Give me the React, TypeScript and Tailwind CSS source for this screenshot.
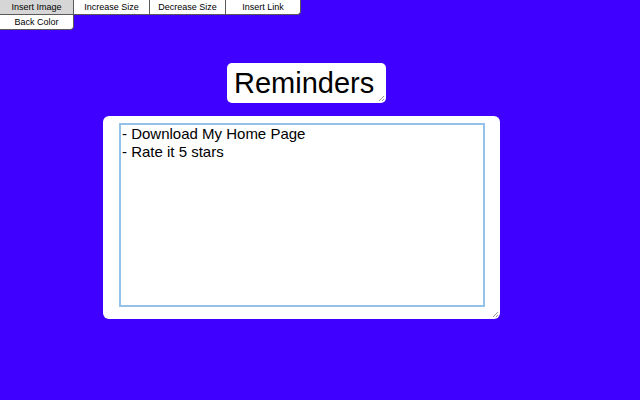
function Grip() {
  return (
    <svg
      className="pointer-events-none absolute bottom-[1px] right-[1px]"
      width="7"
      height="7"
      viewBox="0 0 7 7"
    >
      <path d="M6 1 L1 6 M6 4 L4 6" stroke="#9a9a9a" strokeWidth="1" />
    </svg>
  )
}

const tools = ['Insert Image', 'Increase Size', 'Decrease Size', 'Insert Link']

function App() {
  return (
    <div className="h-[400px] w-[640px] overflow-hidden bg-[#4000ff] font-['Liberation_Sans',Arial,sans-serif]">
      <div className="flex">
        {tools.map((t, i) => (
          <div
            key={t}
            className={
              i === 0
                ? 'flex h-[15px] w-[74px] items-center justify-center border-r border-b border-[#5a5a5a] bg-[#d6d6d6] text-[9px] leading-none text-black'
                : i === 3
                  ? 'flex h-[15px] w-[75px] items-center justify-center rounded-br-[4px] border-r border-b border-[#5a5a5a] bg-white text-[9px] leading-none text-black'
                  : 'flex h-[15px] w-[76px] items-center justify-center border-r border-b border-[#5a5a5a] bg-white text-[9px] leading-none text-black'
            }
          >
            {t}
          </div>
        ))}
      </div>
      <div className="flex h-[15px] w-[74px] items-center justify-center rounded-br-[4px] border-r border-b border-[#5a5a5a] bg-white text-[9px] leading-none text-black">
        Back Color
      </div>

      <div className="relative mt-[33px] ml-[227px] flex h-[40px] w-[159px] items-center rounded-[5px] bg-white pl-[7px] text-[29px] leading-none text-black">
        Reminders
        <Grip />
      </div>

      <div className="relative mt-[13px] ml-[103px] h-[203px] w-[397px] rounded-[6px] bg-white pt-[7px] pl-[16px]">
        <div className="h-[184px] w-[366px] border-2 border-[#94c1e8] px-[1px] text-[15px] leading-[18px] text-black">
          <div>- Download My Home Page</div>
          <div>- Rate it 5 stars</div>
        </div>
        <Grip />
      </div>
    </div>
  )
}

export default App
